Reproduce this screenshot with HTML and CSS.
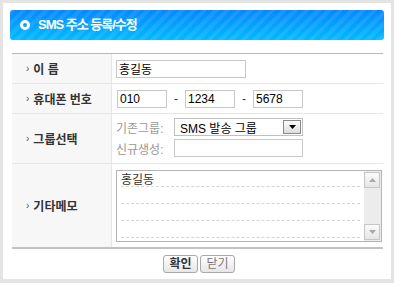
FILE: index.html
```html
<!DOCTYPE html>
<html lang="ko">

<head>
    <meta charset="UTF-8">
    <meta name="viewport" content="width=device-width, initial-scale=1.0">
    <title>SMS 주소 등록/수정</title>
    <link rel="stylesheet" href="styles.css">
</head>

<body>
    <div class="frame">
        <div class="title">
            <span class="title-icon"></span>
            <h1>SMS 주소 등록/수정</h1>
        </div>

        <div class="form">
            <div class="row row-name">
                <div class="label"><span class="bullet">›</span>이 름</div>
                <div class="value">
                    <input class="field field-name" type="text" value="홍길동">
                </div>
            </div>

            <div class="row row-phone">
                <div class="label"><span class="bullet">›</span>휴대폰 번호</div>
                <div class="value">
                    <input class="field field-phone" type="text" value="010">
                    <span class="dash">-</span>
                    <input class="field field-phone" type="text" value="1234">
                    <span class="dash">-</span>
                    <input class="field field-phone" type="text" value="5678">
                </div>
            </div>

            <div class="row row-group">
                <div class="label"><span class="bullet">›</span>그룹선택</div>
                <div class="value group-value">
                    <div class="group-line">
                        <span class="sub-label">기존그룹:</span>
                        <div class="select">
                            <span class="select-text">SMS 발송 그룹</span>
                            <span class="select-btn">
                                <svg width="7" height="4" viewBox="0 0 7 4"><path d="M0 0h7L3.5 4z" fill="#000"/></svg>
                            </span>
                        </div>
                    </div>
                    <div class="group-line">
                        <span class="sub-label">신규생성:</span>
                        <input class="field field-group" type="text">
                    </div>
                </div>
            </div>

            <div class="row row-memo">
                <div class="label"><span class="bullet">›</span>기타메모</div>
                <div class="value">
                    <div class="memo">
                        <div class="memo-lines">
                            <div class="memo-line">홍길동</div>
                            <div class="memo-line"></div>
                            <div class="memo-line"></div>
                            <div class="memo-line"></div>
                        </div>
                        <div class="scrollbar">
                            <span class="scroll-btn">
                                <svg width="7" height="4" viewBox="0 0 7 4"><path d="M0 4h7L3.5 0z" fill="#a8a8a8"/></svg>
                            </span>
                            <span class="scroll-btn">
                                <svg width="7" height="4" viewBox="0 0 7 4"><path d="M0 0h7L3.5 4z" fill="#a8a8a8"/></svg>
                            </span>
                        </div>
                    </div>
                </div>
            </div>
        </div>

        <div class="actions">
            <button class="btn btn-ok">확인</button>
            <button class="btn">닫기</button>
        </div>
    </div>
</body>

</html>
```

FILE: styles.css
```css
* {
    box-sizing: border-box;
    margin: 0;
    padding: 0;
}

body {
    background-color: #e4e4e4;
    font-family: "Liberation Sans", "Noto Sans CJK KR", sans-serif;
    font-size: 12px;
    color: #333;
}

.frame {
    margin: 3px;
    width: 388px;
    height: 276px;
    padding: 7px;
    background-color: #fff;
}

/* header bar */
.title {
    display: flex;
    align-items: center;
    height: 30px;
    padding-left: 10px;
    border-radius: 3px;
    background:
        repeating-linear-gradient(135deg, rgba(255, 255, 255, 0.09) 0 4px, rgba(255, 255, 255, 0) 4px 8px),
        linear-gradient(to bottom, #0787ff, #00bbff);
}

.title-icon {
    width: 10px;
    height: 10px;
    border: 3px solid #fff;
    border-radius: 50%;
    margin-right: 8px;
}

.title h1 {
    font-size: 13px;
    font-weight: bold;
    color: #fff;
    letter-spacing: -1px;
    line-height: 14px;
}

/* form table */
.form {
    margin: 13px 1px 0 2px;
    border-top: 1px solid #b9b9b9;
    border-bottom: 2px solid #c2c2c2;
}

.row {
    display: grid;
    grid-template-columns: 100px 1fr;
    border-bottom: 1px solid #e6e6e6;
}

.row:last-child {
    border-bottom: none;
}

.row-name,
.row-phone {
    height: 30px;
}

.row-group {
    height: 50px;
}

.row-memo {
    height: 83px;
}

.label {
    display: flex;
    align-items: center;
    padding-left: 14px;
    background-color: #f7f7f7;
    border-right: 1px solid #e6e6e6;
    font-weight: bold;
    color: #333;
    white-space: nowrap;
}

.bullet {
    font-size: 10px;
    font-weight: normal;
    color: #555;
    margin-right: 4px;
}

.value {
    display: flex;
    align-items: center;
    padding-left: 4px;
}

.field {
    height: 18px;
    border: 1px solid #c8c8c8;
    padding: 0 2px;
    font-family: inherit;
    font-size: 12px;
    color: #000;
    background-color: #fff;
    outline: none;
}

.field-name {
    width: 130px;
}

.field-phone {
    width: 50px;
}

.row-phone .field-phone:first-child {
    margin-left: 1px;
}

.dash {
    width: 18px;
    text-align: center;
    color: #333;
}

/* group select */
.group-value {
    flex-direction: column;
    align-items: flex-start;
    justify-content: flex-start;
    padding-top: 4px;
    gap: 3px;
}

.group-line {
    display: flex;
    align-items: center;
}

.sub-label {
    width: 58px;
    color: #999;
}

.select {
    display: flex;
    align-items: center;
    justify-content: space-between;
    width: 129px;
    height: 18px;
    padding: 0 1px 0 5px;
    border: 1px solid #c0c0c0;
    color: #000;
}

.select-btn {
    display: flex;
    align-items: center;
    justify-content: center;
    width: 18px;
    height: 14px;
    border: 1px solid #8a8a8a;
    background: linear-gradient(to bottom, #fdfdfd, #dcdcdc);
}

.field-group {
    width: 129px;
}

/* memo */
.row-memo .value {
    align-items: flex-start;
    padding-top: 6px;
}

.memo {
    display: flex;
    width: 266px;
    height: 72px;
    border: 1px solid #b4b4b4;
}

.memo-lines {
    flex: 1;
    padding: 0 4px;
}

.memo-line {
    height: 17px;
    border-bottom: 1px dashed #d4d4d4;
    line-height: 16px;
    color: #333;
}

.memo-line:first-child {
    height: 16px;
    line-height: 18px;
}

.scrollbar {
    display: flex;
    flex-direction: column;
    justify-content: space-between;
    width: 17px;
    padding: 1px 1px 1px 0;
    background-color: #ececec;
}

.scroll-btn {
    display: flex;
    align-items: center;
    justify-content: center;
    height: 16px;
    border: 1px solid #c6c6c6;
    background: linear-gradient(to bottom, #fafafa, #e6e6e6);
}

/* buttons */
.actions {
    display: flex;
    justify-content: center;
    gap: 2px;
    margin-top: 6px;
    padding-left: 4px;
}

.btn {
    width: 35px;
    height: 18px;
    border: 1px solid #a9a9a9;
    border-radius: 3px;
    background: linear-gradient(to bottom, #ffffff, #e6e6e6);
    font-family: inherit;
    font-size: 12px;
    line-height: 14px;
    color: #777;
    cursor: pointer;
}

.btn-ok {
    font-weight: bold;
    color: #333;
}
```
